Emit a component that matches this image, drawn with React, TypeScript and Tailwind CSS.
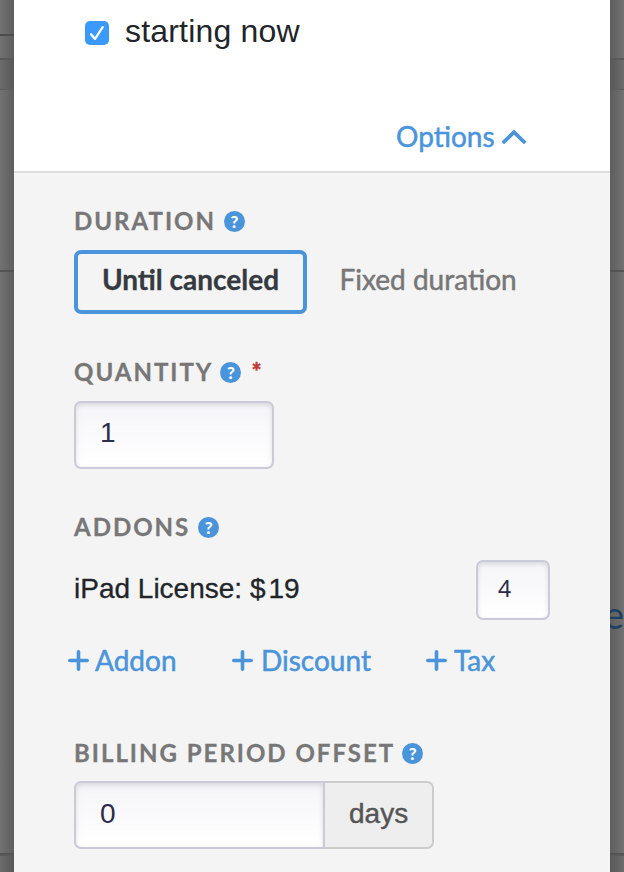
import type { ReactNode } from "react";

function HelpIcon() {
  return (
    <span className="flex h-[21px] w-[21px] shrink-0 items-center justify-center rounded-full bg-[#4a94db] font-['Lato',sans-serif] text-[17px] leading-[21px] font-black tracking-normal text-white">
      ?
    </span>
  );
}

function Label({ children, className }: { children: ReactNode; className: string }) {
  return (
    <div className="flex h-[30px] items-center">
      <span className={`whitespace-nowrap font-['Lato',sans-serif] text-[24px] leading-[30px] font-bold text-[#777] [-webkit-text-stroke:0.3px_#777] ${className}`}>
        {children}
      </span>
      <HelpIcon />
    </div>
  );
}

function AddLink({ children, className }: { children: ReactNode; className: string }) {
  return (
    <a className={`flex shrink-0 items-center whitespace-nowrap text-[28px] leading-[34px] text-[#4a94db] [-webkit-text-stroke:0.5px_#4a94db] ${className}`}>
      <svg className="h-[21px] w-[21px] shrink-0" viewBox="0 0 21 21" fill="none" stroke="currentColor" strokeWidth="3.6" strokeLinecap="round">
        <path d="M1.8 10.5h17.4M10.5 1.8v17.4" />
      </svg>
      {children}
    </a>
  );
}

/* The slice of the dimmed page that shows on either side of the dialog. */
function Backdrop({ side }: { side: "left" | "right" }) {
  const left = side === "left";
  return (
    <div
      className={`flex h-full w-[14px] shrink-0 flex-col overflow-hidden ${
        left ? "bg-linear-to-r from-[#727272] to-[#5e5e5e]" : "bg-linear-to-l from-[#727272] to-[#5e5e5e]"
      }`}
    >
      <div className="h-[34px] shrink-0" />
      <div className={`h-[2px] shrink-0 ${left ? "bg-[#4c4c4c]" : ""}`} />
      <div className="h-[22px] shrink-0" />
      <div className="h-[2px] shrink-0 bg-[#595959]" />
      <div className="h-[29px] shrink-0 bg-black/5" />
      <div className="h-px shrink-0 bg-[#5d5d5d]" />
      <div className="h-[180px] shrink-0" />
      <div className="h-[2px] shrink-0 bg-[#545454]" />
      <div className="h-[322px] shrink-0" />
      <div className="h-[40px] shrink-0 font-['Lato',sans-serif] text-[38px] leading-[40px] text-[#204063]">
        {left ? null : <span className="-ml-[6px]">e</span>}
      </div>
      <div className="h-[219px] shrink-0" />
      <div className="h-[3px] shrink-0 bg-linear-to-b from-[#505050] to-[#5c5c5c]" />
      <div className="grow bg-black/5" />
    </div>
  );
}

export default function App() {
  return (
    <div className="flex h-[872px] w-[624px] overflow-hidden bg-[#686868] font-['Lato',sans-serif]">
      <Backdrop side="left" />
      <main className="flex h-full w-[596px] shrink-0 flex-col bg-[#f4f4f4]">
        <header className="flex h-[173px] shrink-0 flex-col border-b-2 border-[#dedede] bg-white">
          <label className="mt-[14px] ml-[71px] flex h-[36px] items-center">
            <span className="mt-[2px] flex h-6 w-6 items-center justify-center rounded-[5px] bg-[#3b99fc]">
              <svg className="h-6 w-6" viewBox="0 0 24 24" fill="none" stroke="white" strokeWidth="2.3" strokeLinecap="round" strokeLinejoin="round">
                <path d="M6 13.3l4 4.6L17.7 6.2" />
              </svg>
            </span>
            <span className="mb-[2px] ml-4 font-['Liberation_Sans',sans-serif] text-[32px] leading-[36px] tracking-[0.18px] text-[#212529]">
              starting now
            </span>
          </label>
          <a className="mt-[69px] ml-[382px] flex h-[34px] items-center text-[28px] leading-[34px] text-[#4a94db] [-webkit-text-stroke:0.5px_#4a94db]">
            Options
            <svg className="mt-px ml-[6px] h-4 w-[26px]" viewBox="0 0 26 16" fill="none" stroke="currentColor" strokeWidth="3.8">
              <path d="M1.8 14L13 3.2l11.2 10.8" />
            </svg>
          </a>
        </header>

        <section className="flex grow flex-col pl-[60px]">
          <div className="mt-[33px]">
            <Label className="mr-[8px] tracking-[2px]">DURATION</Label>
          </div>
          <div className="mt-[14px] flex h-[64px] shrink-0">
            <button className="flex w-[233px] justify-center rounded-[7px] border-4 border-[#4a94db] pt-[8px] text-[28px] leading-[34px] font-bold text-[#343a40] [-webkit-text-stroke:0.3px_#343a40]">
              Until canceled
            </button>
            <span className="ml-[32.5px] pt-[12px] text-[28px] leading-[34px] text-[#777] [-webkit-text-stroke:0.5px_#777]">
              Fixed duration
            </span>
          </div>

          <div className="mt-[43px] flex">
            <Label className="mr-[7px] tracking-[2px]">QUANTITY</Label>
            <span className="ml-[10px] text-[24px] leading-[30px] font-black text-[#c03a3a] [-webkit-text-stroke:0.4px_#c03a3a]">*</span>
          </div>
          <div className="mt-[14px] h-[68px] w-[200px] shrink-0 rounded-[7px] border-2 border-[#cacad8] bg-linear-to-b from-[#f5f5f9] to-white pt-[13px] pl-6 font-['Liberation_Sans',sans-serif] text-[28px] leading-[34px] text-[#2c2c48] shadow-[inset_0_2px_5px_rgba(0,0,0,0.12)]">
            1
          </div>

          <div className="mt-[43px]">
            <Label className="mr-[8px] tracking-[2px]">ADDONS</Label>
          </div>
          <div className="mt-[18px] flex h-[60px] shrink-0 justify-between pr-[60px]">
            <span className="pt-[12px] font-['Liberation_Sans',sans-serif] text-[28px] leading-[34px] text-[#212529] [-webkit-text-stroke:0.3px_#212529]">
              iPad License: $<span className="ml-[3px]">19</span>
            </span>
            <div className="h-[60px] w-[74px] rounded-[7px] border-2 border-[#cacad8] bg-linear-to-b from-[#f5f5f9] to-white pt-[9px] pl-5 font-['Noto_Sans',sans-serif] text-[23px] leading-[34px] text-[#2c2c48] shadow-[inset_0_2px_5px_rgba(0,0,0,0.12)]">
              4
            </div>
          </div>
          <div className="mt-[23px] -ml-[6px] flex h-[34px]">
            <AddLink className="w-[164px] gap-1.5">Addon</AddLink>
            <AddLink className="w-[194px] gap-2">Discount</AddLink>
            <AddLink className="gap-[7px]">Tax</AddLink>
          </div>

          <div className="mt-[61px]">
            <Label className="mr-[7px] tracking-[2px]">BILLING PERIOD OFFSET</Label>
          </div>
          <div className="mt-[13px] flex h-[68px] shrink-0">
            <div className="w-[251px] rounded-l-[7px] border-2 border-[#cacad8] bg-linear-to-b from-[#f5f5f9] to-white pt-[14px] pl-6 font-['Liberation_Sans',sans-serif] text-[28px] leading-[34px] text-[#2c2c48] shadow-[inset_0_2px_5px_rgba(0,0,0,0.12)]">
              0
            </div>
            <div className="w-[109px] rounded-r-[7px] border-2 border-l-0 border-[#ccc] bg-[#eee] pt-[14px] pl-6 font-['Liberation_Sans',sans-serif] text-[28px] leading-[34px] text-[#555] [-webkit-text-stroke:0.4px_#555]">
              days
            </div>
          </div>
        </section>
      </main>
      <Backdrop side="right" />
    </div>
  );
}
